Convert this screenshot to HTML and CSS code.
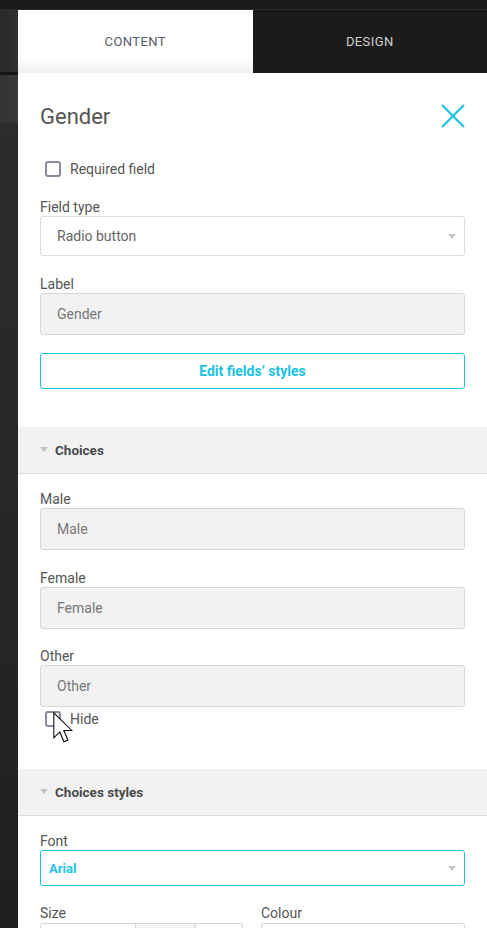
FILE: index.html
```html
<!DOCTYPE html>
<html>
<head>
<meta charset="utf-8">
<link rel="stylesheet" href="styles.css">
</head>
<body>
<div class="topbar"></div>
<div class="main">
  <aside class="rail">
    <div class="rail-a"></div>
    <div class="rail-sep"></div>
    <div class="rail-b"></div>
    <div class="rail-c"></div>
  </aside>
  <section class="panel">
    <nav class="tabs">
      <div class="tab active">CONTENT</div>
      <div class="tab">DESIGN</div>
    </nav>
    <div class="content">
      <div class="block top-block">
        <header class="title-row">
          <h1 class="title">Gender</h1>
          <svg class="close" width="24" height="24" viewBox="0 0 24 24"><path d="M1 1 L23 23 M23 1 L1 23" stroke="#1bc3e6" stroke-width="2.2" fill="none"/></svg>
        </header>
        <div class="check check-req"><span class="box"></span><span>Required field</span></div>
        <div class="field f-first">
          <div class="flabel">Field type</div>
          <div class="select">Radio button<span class="caret"></span></div>
        </div>
        <div class="field">
          <div class="flabel">Label</div>
          <div class="input">Gender</div>
        </div>
        <div class="btn">Edit fields’ styles</div>
      </div>

      <div class="sec-head"><span class="tri"></span>Choices</div>
      <div class="block choices">
        <div class="field f-m">
          <div class="flabel">Male</div>
          <div class="input">Male</div>
        </div>
        <div class="field f-2">
          <div class="flabel">Female</div>
          <div class="input">Female</div>
        </div>
        <div class="field f-3">
          <div class="flabel">Other</div>
          <div class="input">Other</div>
        </div>
        <div class="check check-hide">
          <span class="box"></span><span>Hide</span>
          <svg class="cursor" width="20" height="31" viewBox="0 0 12.6 19.6"><path d="M0.5 0.5 L0.5 16.3 L4.3 12.6 L6.9 18.8 L9.4 17.7 L6.8 11.7 L11.9 11.7 Z" fill="#fff" stroke="#000" stroke-width="0.65" stroke-linejoin="miter"/></svg>
        </div>
      </div>

      <div class="sec-head"><span class="tri"></span>Choices styles</div>
      <div class="block styles">
        <div class="field f-m">
          <div class="flabel">Font</div>
          <div class="select active-sel">Arial<span class="caret"></span></div>
        </div>
        <div class="row2">
          <div class="field">
            <div class="flabel">Size</div>
            <div class="size-box"><span class="sz-a"></span><span class="sz-b"></span><span class="sz-c"></span></div>
          </div>
          <div class="field">
            <div class="flabel">Colour</div>
            <div class="colour-box"></div>
          </div>
        </div>
      </div>
    </div>
  </section>
</div>
</body>
</html>
```

FILE: styles.css
```css
* { box-sizing: border-box; }
html, body { margin: 0; padding: 0; }
body {
  background: #1b1b1b;
  font-family: Roboto, "Liberation Sans", sans-serif;
  height: 928px;
  overflow: hidden;
}
.topbar {
  height: 10px;
  background: #1b1b1b;
  border-bottom: 1px solid #2c2c2c;
}
.main {
  display: flex;
  height: 918px;
}
.rail {
  width: 18px;
  flex: none;
  display: flex;
  flex-direction: column;
}
.rail-a { height: 62px; flex: none; background: linear-gradient(90deg, #2a2a2a, #303030); }
.rail-sep { height: 3px; flex: none; background: #141414; }
.rail-b { height: 48px; flex: none; background: linear-gradient(90deg, #333, #383838); }
.rail-c { flex: 1; background: linear-gradient(180deg, #2c2c2c, #262626 60%, #1f1f1f); }
.panel {
  flex: 1;
  display: flex;
  flex-direction: column;
  min-width: 0;
  overflow: hidden;
}
.tabs {
  display: flex;
  flex: none;
  height: 63px;
}
.tab {
  flex: 1;
  display: flex;
  align-items: center;
  justify-content: center;
  font-size: 13px;
  letter-spacing: 0.4px;
  color: #cfcfcf;
  background: #1b1b1b;
}
.tab.active {
  color: #555a66;
  background: linear-gradient(180deg, #fff 0, #fff 78%, #eeeeee 100%);
}
.content {
  flex: 1 0 auto;
  background: #fff;
}
.block { padding: 0 22px; }
.top-block { padding-top: 29px; padding-bottom: 38px; }
.title-row {
  display: flex;
  align-items: center;
  justify-content: space-between;
  height: 30px;
}
.title {
  margin: 0;
  font-size: 22px;
  font-weight: 400;
  color: #555;
  line-height: 30px;
}
.close { margin-top: -3px; }
.check {
  display: flex;
  align-items: center;
  font-size: 14px;
  color: #555;
  gap: 9px;
  padding-left: 5px;
}
.check-req { margin-top: 27px; height: 20px; }
.box {
  width: 16px;
  height: 16px;
  border: 2px solid #8a8a9c;
  border-radius: 3px;
  background: #fff;
  flex: none;
}
.field { display: flex; flex-direction: column; }
.f-first { margin-top: 20px; }
.field + .field { margin-top: 20px; }
.flabel {
  font-size: 14px;
  line-height: 16px;
  color: #555;
  margin-bottom: 1px;
}
.select {
  position: relative;
  height: 40px;
  border: 1px solid #dcdcdc;
  border-radius: 3px;
  display: flex;
  align-items: center;
  padding-left: 16px;
  font-size: 14px;
  color: #666;
  background: #fff;
}
.caret {
  position: absolute;
  right: 8px;
  top: 50%;
  margin-top: -2px;
  border-left: 4px solid transparent;
  border-right: 4px solid transparent;
  border-top: 5px solid #c8c8c8;
}
.input {
  height: 42px;
  border: 1px solid #d6d6d6;
  border-radius: 3px;
  background: #f2f2f2;
  display: flex;
  align-items: center;
  padding-left: 16px;
  font-size: 14px;
  color: #777;
}
.btn {
  margin-top: 18px;
  height: 36px;
  border: 1px solid #1bc3e6;
  border-radius: 3px;
  display: flex;
  align-items: center;
  justify-content: center;
  font-size: 14px;
  font-weight: 700;
  color: #1bc3e6;
}
.sec-head {
  height: 47px;
  background: #f2f2f2;
  border-bottom: 1px solid #dedede;
  display: flex;
  align-items: center;
  padding-left: 22px;
  font-size: 13.5px;
  font-weight: 700;
  color: #4a4a4a;
}
.tri {
  width: 0;
  height: 0;
  border-left: 4px solid transparent;
  border-right: 4px solid transparent;
  border-top: 5px solid #c4c4c4;
  margin-right: 7px;
  margin-top: -2px;
}
.choices { padding-top: 17px; padding-bottom: 42px; }
.field.f-m { margin-top: 0; }
.field.f-2 { margin-top: 20px; }
.field.f-3 { margin-top: 19px; }
.check-hide {
  position: relative;
  margin-top: 4px;
  height: 16px;
}
.cursor {
  position: absolute;
  left: 13px;
  top: 1px;
}
.styles { padding-top: 17px; }
.active-sel {
  height: 36px;
  border-color: #1bc3e6;
  color: #1bc3e6;
  font-weight: 700;
  font-size: 13px;
  padding-left: 8px;
}
.row2 {
  display: grid;
  grid-template-columns: 203px 204px;
  column-gap: 18px;
  margin-top: 19px;
}
.row2 .field + .field { margin-top: 0; }
.row2 .flabel { margin-bottom: 2px; }
.size-box {
  height: 40px;
  display: flex;
  border: 1px solid #d6d6d6;
  border-radius: 3px;
  overflow: hidden;
}
.sz-a { width: 94px; }
.sz-b { width: 61px; background: #f2f2f2; border-left: 1px solid #d6d6d6; border-right: 1px solid #d6d6d6; }
.sz-c { flex: 1; }
.colour-box {
  height: 40px;
  border: 1px solid #d6d6d6;
  border-radius: 3px;
}
```
